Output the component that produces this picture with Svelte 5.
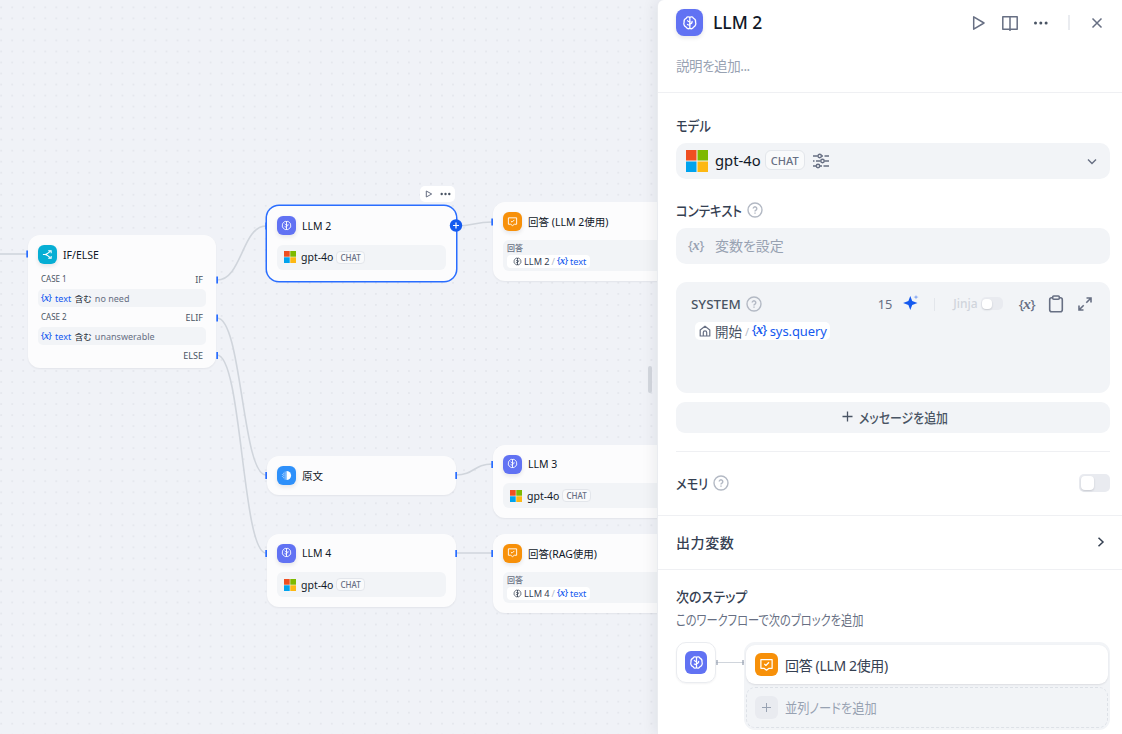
<script lang="ts">
  type FlowNode = {
    id: string;
    kind: 'llm' | 'answer' | 'template' | 'ifelse';
    title: string;
    x: number;
    y: number;
    w: number;
    h: number;
    ref?: string;
    selected?: boolean;
  };

  const nodes: FlowNode[] = [
    {id: 'if', kind: 'ifelse', title: 'IF/ELSE', x: 28, y: 235, w: 188, h: 133},
    {id: 'llm2', kind: 'llm', title: 'LLM 2', x: 267, y: 206, w: 189, h: 75, selected: true},
    {id: 'a1', kind: 'answer', title: '回答 (LLM 2使用)', x: 493, y: 202, w: 189, h: 79, ref: 'LLM 2'},
    {id: 'tpl', kind: 'template', title: '原文', x: 267, y: 456, w: 189, h: 39},
    {id: 'llm3', kind: 'llm', title: 'LLM 3', x: 493, y: 444.5, w: 189, h: 73.5},
    {id: 'llm4', kind: 'llm', title: 'LLM 4', x: 267, y: 533.5, w: 189, h: 73.5},
    {id: 'a2', kind: 'answer', title: '回答(RAG使用)', x: 493, y: 533.5, w: 189, h: 79.5, ref: 'LLM 4'},
  ];

  const cases = [
    {label: 'CASE 1', branch: 'IF', value: 'no need'},
    {label: 'CASE 2', branch: 'ELIF', value: 'unanswerable'},
  ];

  const edges = [
    'M0 254H27',
    'M217 280C242 280 242 226 266 226',
    'M217 318C242 318 242 475 266 475',
    'M217 355C242 355 242 553 266 553',
    'M456 226C474 226 474 222 492 222',
    'M456 475C474 475 474 464 492 464',
    'M456 553H492',
  ];

  const handles = [
    [26, 254],
    [216, 280],
    [216, 318],
    [216, 355.5],
    [265, 226],
    [265, 475.5],
    [265, 553.5],
    [455, 475.5],
    [455, 553.5],
    [491, 222],
    [491, 464.5],
    [491, 553.5],
  ];

  let memory = $state(false);
  let jinja = $state(false);
</script>

{#snippet brain()}
  <svg viewBox="0 0 24 24" fill="none" stroke="currentColor" stroke-width="2" stroke-linecap="round" stroke-linejoin="round" aria-hidden="true">
    <path d="M12 4v16M12 3.500C10 2.200 7.500 2.800 6.500 5C4 6 2.800 8.500 3.200 11C2 14 3.500 17.500 6.300 18.500C7.500 21 10 21.600 12 20.500" />
    <path d="M12 3.500C14 2.200 16.500 2.800 17.500 5C20 6 21.200 8.500 20.800 11C22 14 20.500 17.500 17.700 18.500C16.500 21 14 21.600 12 20.500" />
    <path d="M12 13.500C14 13.500 15.500 12.500 15.500 10M12 10.500C10.300 10.500 9.300 10 8.500 8.800M12 15.500C10.500 15.500 9.500 15.300 8.500 14.500" />
  </svg>
{/snippet}

{#snippet block_icon(kind: string)}
  <span class="block_icon {kind}">
    {#if kind === 'llm'}
      {@render brain()}
    {:else if kind === 'answer'}
      <svg viewBox="0 0 24 24" fill="none" stroke="currentColor" stroke-width="2" stroke-linejoin="round" aria-hidden="true">
        <path d="M3 4h18v14h-5l-4 3-4-3H3z" />
        <path d="M8.500 11l2.500 2.500L16 8.500" />
      </svg>
    {:else if kind === 'template'}
      <svg viewBox="0 0 24 24" fill="currentColor" aria-hidden="true">
        <path d="M12 2a10 10 0 0 1 0 20z" />
        <path d="M8 3h2v18H8zM5 6h1.800v3H5zM5 10.500h1.800v3H5zM5 15h1.800v3H5zM2 8.500h1.800v2.500H2zM2 13h1.800v2.500H2z" opacity=".6" />
      </svg>
    {:else}
      <svg viewBox="0 0 24 24" fill="none" stroke="currentColor" stroke-width="2.200" aria-hidden="true">
        <path d="M2 12h7M9 12l9-7M9 12l9 7M13.500 4H20v5M13.500 20H20v-5" />
        <circle cx="9" cy="12" r="2" fill="currentColor" stroke="none" />
      </svg>
    {/if}
  </span>
{/snippet}

{#snippet microsoft()}
  <svg class="ms" viewBox="0 0 22 22" aria-hidden="true">
    <path fill="#f3f3f3" d="M0 0h22v22H0z" />
    <path fill="#ef4f21" d="M0 0h10.500v10.500H0z" />
    <path fill="#7eb900" d="M11.500 0H22v10.500H11.500z" />
    <path fill="#00a3ee" d="M0 11.500h10.500V22H0z" />
    <path fill="#fdb813" d="M11.500 11.500H22V22H11.500z" />
  </svg>
{/snippet}

{#snippet variable()}
  <span class="variable">&#123;<i>x</i>&#125;</span>
{/snippet}

{#snippet help()}
  <svg class="help" viewBox="0 0 16 16" fill="none" stroke="currentColor" stroke-width="1.400" aria-hidden="true">
    <circle cx="8" cy="8" r="7" />
    <path d="M6.200 6.600a1.800 1.800 0 1 1 2.800 1.500c-.7.400-1 .7-1 1.300" />
    <path d="M8 10.400v1.300" />
  </svg>
{/snippet}

<div class="workflow">
  <div class="canvas">
    <svg class="layer" width="1122" height="734" aria-hidden="true">
      <defs>
        <pattern id="dots" width="11.020" height="11.020" x="-4.300" y="1.900" patternUnits="userSpaceOnUse">
          <circle cx="5.500" cy="5.500" r=".8" fill="#dfe1e7" />
        </pattern>
      </defs>
      <rect width="1122" height="734" fill="url(#dots)" />
      {#each edges as d}
        <path {d} fill="none" stroke="#d0d5dc" stroke-width="1.600" />
      {/each}
    </svg>

    {#each nodes as node (node.id)}
      <div
        class="node"
        class:selected={node.selected}
        style="left: {node.x}px; top: {node.y}px; width: {node.w}px; height: {node.h}px"
      >
        <div class="node_head">
          {@render block_icon(node.kind)}
          <span class="node_title">{node.title}</span>
        </div>
        {#if node.kind === 'llm'}
          <div class="node_model">
            {@render microsoft()}
            <span>gpt-4o</span>
            <span class="badge">CHAT</span>
          </div>
        {:else if node.kind === 'answer'}
          <div class="node_answer">
            <span class="answer_label">回答</span>
            <span class="chip">
              {@render brain()}
              <span>{node.ref}</span>
              <span class="slash">/</span>
              {@render variable()}
              <span class="blue">text</span>
            </span>
          </div>
        {:else if node.kind === 'ifelse'}
          <div class="cases">
            {#each cases as item}
              <div class="case_row">
                <span class="case_label">{item.label}</span>
                <span class="branch">{item.branch}</span>
              </div>
              <div class="condition">
                {@render variable()}
                <span class="blue">text</span>
                <span class="operator">含む</span>
                <span>{item.value}</span>
              </div>
            {/each}
            <div class="case_row last">
              <span class="branch">ELSE</span>
            </div>
          </div>
        {/if}
      </div>
    {/each}

    <svg class="layer" width="1122" height="734" aria-hidden="true">
      {#each handles as [x, y]}
        <rect x={x + 0.3} y={y - 3.5} width="1.700" height="7" fill="#296dff" />
      {/each}
      <circle cx="456" cy="225.500" r="6.200" fill="#155aef" />
      <path d="M453 225.500h6M456 222.500v6" stroke="#fff" stroke-width="1.200" />
    </svg>

    <div class="node_tools">
      <svg width="8" height="8" viewBox="0 0 8 8" aria-hidden="true"><path d="M1.300 1v6L6.700 4z" fill="none" stroke="#676f83" /></svg>
      <svg width="11" height="8" viewBox="0 0 11 8" fill="#495464" aria-hidden="true">
        <circle cx="1.700" cy="4" r="1.200" /><circle cx="5.500" cy="4" r="1.200" /><circle cx="9.300" cy="4" r="1.200" />
      </svg>
    </div>
    <div class="resizer"></div>
  </div>

  <aside class="panel">
    <header class="panel_head">
      <div class="title_row">
        {@render block_icon('llm')}
        <h1>LLM 2</h1>
        <div class="head_tools">
          <svg width="18" height="18" viewBox="0 0 18 18" fill="none" stroke="currentColor" stroke-width="1.500" stroke-linejoin="round" aria-hidden="true"><path d="M4.700 2.800v12.400L15 9z" /></svg>
          <svg width="18" height="18" viewBox="0 0 18 18" fill="none" stroke="currentColor" stroke-width="1.500" stroke-linejoin="round" aria-hidden="true"><path d="M9 17V3.300M9 3.300L8.200 2.700H1.800v12.500h6.400l.8.600.8-.6h6.400V2.700H9.800z" /></svg>
          <svg width="18" height="18" viewBox="0 0 18 18" fill="#495464" aria-hidden="true"><circle cx="3.500" cy="9" r="1.500" /><circle cx="8.800" cy="9" r="1.500" /><circle cx="14.100" cy="9" r="1.500" /></svg>
          <span class="separator"></span>
          <svg width="18" height="18" viewBox="0 0 18 18" stroke="currentColor" stroke-width="1.500" aria-hidden="true"><path d="M4.500 4.500l9 9M13.500 4.500l-9 9" /></svg>
        </div>
      </div>
      <p class="description">説明を追加...</p>
    </header>

    <section class="settings">
      <div class="label"><span class="t_model">モデル</span></div>
      <div class="field model_field">
        {@render microsoft()}
        <span class="model_name">gpt-4o</span>
        <span class="badge">CHAT</span>
        <svg class="sliders" width="16" height="16" viewBox="0 0 16 16" fill="none" stroke="currentColor" stroke-width="1.400" aria-hidden="true">
          <path d="M0 3h4.800M8.500 3H10M11.500 3H16M0 8h1.500M3 8h4.600M11.300 8H16M0 13h3.200M7 13h2M10.500 13H16" />
          <circle cx="6.700" cy="3" r="1.700" /><circle cx="9.500" cy="8" r="1.700" /><circle cx="5" cy="13" r="1.700" />
        </svg>
        <svg class="chevron" width="10" height="10" viewBox="0 0 10 10" fill="none" stroke="currentColor" stroke-width="1.400" aria-hidden="true"><path d="M1 3.500l4 4 4-4" /></svg>
      </div>

      <div class="label context_label"><span class="t_context">コンテキスト</span>{@render help()}</div>
      <div class="field context_field">
        {@render variable()}
        <span class="t_placeholder">変数を設定</span>
      </div>

      <div class="prompt">
        <div class="prompt_head">
          <span class="prompt_role">SYSTEM</span>
          {@render help()}
          <div class="prompt_tools">
            <span class="count">15</span>
            <svg class="sparkle" width="16" height="16" viewBox="0 0 16 16" fill="#155aef" aria-hidden="true">
              <path d="M7.300 1L9.200 6l5.300 2-5.300 2-1.900 5-1.900-5L.1 8l5.300-2z" />
              <path d="M13 0l.7 1.400 1.800.7-1.800.7L13 4.200l-.7-1.400-1.800-.7 1.800-.7z" opacity=".5" />
            </svg>
            <span class="thin"></span>
            <span class="jinja">Jinja</span>
            <button class="switch mini" class:on={jinja} aria-label="Jinja" onclick={() => (jinja = !jinja)}></button>
            <span class="insert">{@render variable()}</span>
            <svg class="clipboard" width="16" height="18" viewBox="0 0 16 18" fill="none" stroke="currentColor" stroke-width="1.600" aria-hidden="true">
              <rect x="1.700" y="2.700" width="12.600" height="14" rx="2" /><rect x="4.700" y="1" width="6.600" height="3.200" rx="1" fill="#f2f4f7" />
            </svg>
            <svg width="16" height="16" viewBox="0 0 16 16" fill="none" stroke="currentColor" stroke-width="1.600" aria-hidden="true"><path d="M9.500 2H14v4.500M14 2L9.300 6.700M6.500 14H2V9.500M2 14l4.700-4.700" /></svg>
          </div>
        </div>
        <div class="prompt_body">
          <span class="prompt_chip">
            <svg width="12" height="12" viewBox="0 0 12 12" fill="none" stroke="#676f83" stroke-width="1.200" stroke-linejoin="round" aria-hidden="true"><path d="M1.200 5L6 1.200 10.800 5v6H1.200zM4.300 11V7.500a1.700 1.700 0 0 1 3.400 0V11" /></svg>
            <span class="start">開始</span>
            <span class="slash">/</span>
            {@render variable()}
            <span class="blue query">sys.query</span>
          </span>
        </div>
      </div>

      <button class="add_message">
        <svg width="11" height="11" viewBox="0 0 11 11" stroke="currentColor" stroke-width="1.300" aria-hidden="true"><path d="M5.500 .5v10M.5 5.500h10" /></svg>
        <span class="t_message">メッセージを追加</span>
      </button>

      <div class="memory">
        <span class="t_memory">メモリ</span>
        {@render help()}
        <button class="switch" class:on={memory} aria-label="メモリ" onclick={() => (memory = !memory)}></button>
      </div>
    </section>

    <section class="output">
      <span class="t_output">出力変数</span>
      <svg width="10" height="12" viewBox="0 0 10 12" fill="none" stroke="currentColor" stroke-width="1.500" aria-hidden="true"><path d="M2.500 1.700L7 6l-4.500 4.300" /></svg>
    </section>

    <section class="next">
      <h2 class="t_next">次のステップ</h2>
      <p class="t_next_hint">このワークフローで次のブロックを追加</p>
      <div class="next_row">
        <div class="next_from">{@render block_icon('llm')}</div>
        <svg class="link" width="28" height="40" viewBox="0 0 28 40" aria-hidden="true">
          <path d="M0 20.500h28" stroke="#d0d5dc" />
          <path d="M1 18v5M27 18v5" stroke="#98a2b2" stroke-width="1.300" />
        </svg>
        <div class="next_list">
          <div class="next_item">
            {@render block_icon('answer')}
            <span class="t_answer">回答 (LLM 2使用)</span>
          </div>
          <div class="next_item add">
            <span class="add_icon">
              <svg width="9" height="9" viewBox="0 0 9 9" stroke="currentColor" aria-hidden="true"><path d="M4.500 0v9M0 4.500h9" /></svg>
            </span>
            <span class="t_parallel">並列ノードを追加</span>
          </div>
        </div>
      </div>
    </section>
  </aside>
</div>

<style>
  :global(body) {
    overflow: hidden;
  }

  .workflow {
    position: relative;
    display: flex;
    justify-content: flex-end;
    width: 1122px;
    height: 734px;
    overflow: hidden;
    background: #f0f2f7;
    color: #354052;
    font-family: 'Noto Sans', 'Noto Sans CJK JP', sans-serif;
    font-size: 14px;
    font-feature-settings: 'palt';
  }

  .workflow * {
    box-sizing: border-box;
  }

  span {
    white-space: nowrap;
  }

  svg {
    flex: none;
    display: block;
  }

  h1,
  h2,
  p {
    margin: 0;
  }

  button {
    border: 0;
    padding: 0;
    font: inherit;
    font-feature-settings: inherit;
    cursor: pointer;
  }

  .canvas,
  .layer {
    position: absolute;
    inset: 0;
  }

  .node {
    position: absolute;
    display: flex;
    flex-direction: column;
    padding: 10px;
    border-radius: 12px;
    background: #fcfcfd;
    box-shadow: 0 1px 2px rgba(16, 24, 40, 0.06);
    font-size: 9px;
  }

  .node.selected {
    box-shadow: 0 0 0 1.5px #296dff;
  }

  .node_head {
    display: flex;
    align-items: center;
    gap: 6px;
    height: 19px;
    flex: none;
  }

  .node_title {
    color: #101828;
    font-size: 10.5px;
    font-weight: 400;
  }

  .block_icon {
    display: flex;
    flex: none;
    align-items: center;
    justify-content: center;
    width: 19px;
    height: 19px;
    border-radius: 6px;
    color: #fff;
    box-shadow: 0 2px 4px rgba(16, 24, 40, 0.1);
  }

  .block_icon svg {
    width: 58%;
    height: 58%;
  }

  .llm {
    background: #6172f3;
  }

  .answer {
    background: #f79009;
  }

  .template {
    background: #2e90fa;
  }

  .ifelse {
    background: #06aed4;
  }

  .node_model {
    display: flex;
    align-items: center;
    height: 25px;
    margin-top: 9.5px;
    padding-left: 7px;
    border-radius: 6px;
    background: #f2f4f7;
    color: #101828;
    font-size: 10.5px;
  }

  .ms {
    width: 12px;
    height: 12px;
    margin-right: 5px;
  }

  .badge {
    display: inline-flex;
    align-items: center;
    height: 13px;
    margin-left: 3px;
    padding: 0 3px;
    border: 1px solid #e3e6eb;
    border-radius: 4px;
    background: #f9fafb;
    color: #676f83;
    font-size: 8px;
    font-weight: 500;
  }

  .node_answer {
    display: flex;
    flex-direction: column;
    align-items: flex-start;
    height: 32px;
    margin-top: 9px;
    padding: 1px 4px;
    border-radius: 6px;
    background: #f2f4f7;
  }

  .answer_label {
    height: 14px;
    color: #676f83;
    font-size: 8px;
    font-weight: 500;
    line-height: 13px;
  }

  .chip {
    display: flex;
    align-items: center;
    gap: 2px;
    height: 13px;
    padding: 0 4px 0 6px;
    border-radius: 4px;
    background: #fff;
    font-size: 9.2px;
  }

  .chip svg {
    width: 9px;
    height: 9px;
  }

  .slash {
    color: #b6bcc8;
  }

  .blue {
    color: #155aef;
  }

  .variable {
    color: #155aef;
    font-family: 'Noto Sans', sans-serif;
    font-size: 0.95em;
    font-weight: 500;
    line-height: 1;
    letter-spacing: -0.3px;
  }

  .variable i {
    font-family: 'Liberation Serif', serif;
    font-size: 1.15em;
    font-weight: 700;
  }

  .cases {
    display: flex;
    flex-direction: column;
    margin-top: 5px;
  }

  .case_row {
    display: flex;
    align-items: center;
    justify-content: space-between;
    height: 20px;
    padding: 0 3px;
    color: #495464;
    font-size: 8px;
  }

  .case_row.last {
    justify-content: flex-end;
  }

  .case_label {
    padding-bottom: 1px;
  }

  .branch {
    padding-top: 1px;
    font-size: 9px;
  }

  .condition {
    display: flex;
    align-items: center;
    gap: 3.5px;
    height: 18px;
    padding-left: 3px;
    border-radius: 5px;
    background: #f2f4f7;
    color: #676f83;
    font-size: 9px;
  }

  .operator {
    color: #101828;
    font-size: 8.5px;
  }

  .node_tools {
    position: absolute;
    top: 186px;
    left: 420px;
    display: flex;
    align-items: center;
    gap: 7px;
    height: 16px;
    padding: 0 4px 0 5px;
    border-radius: 5px;
    background: #fff;
  }

  .resizer {
    position: absolute;
    top: 366px;
    left: 648px;
    width: 4px;
    height: 27px;
    border-radius: 2px;
    background: #d3d7de;
  }

  .panel {
    position: relative;
    width: 464px;
    height: 734px;
    border-radius: 6px 0 0 0;
    background: #fff;
    box-shadow: -1px 0 0 #eaecf0, -4px 0 14px rgba(16, 24, 40, 0.07);
  }

  .panel_head {
    height: 93px;
    padding: 9px 16px 0 18px;
    border-bottom: 1px solid #eff0f3;
  }

  .title_row {
    display: flex;
    align-items: center;
    height: 27px;
  }

  .title_row .block_icon {
    width: 27px;
    height: 27px;
    border-radius: 8px;
  }

  h1 {
    margin-left: 10px;
    color: #101828;
    font-size: 17.5px;
    font-weight: 500;
    line-height: 27px;
  }

  .head_tools {
    display: flex;
    align-items: center;
    gap: 13.5px;
    margin-left: auto;
    color: #676f83;
  }

  .separator {
    width: 2px;
    height: 15px;
    margin: 0 5px 0 4px;
    background: #eaecf0;
  }

  .description {
    margin-top: 20px;
    color: #98a2b2;
    font-size: 13.5px;
    line-height: 21px;
    letter-spacing: -0.45px;
  }

  .settings {
    padding: 21px 12px 0 18px;
    height: 423px;
    border-bottom: 1px solid #eff0f3;
  }

  .label {
    display: flex;
    align-items: center;
    height: 21px;
    margin-bottom: 8px;
    font-weight: 500;
  }

  .t_model,
  .t_context,
  .t_message,
  .t_memory,
  .t_next,
  .t_next_hint,
  .t_parallel {
    transform-origin: left;
  }

  .t_model {
    transform: scaleX(0.88);
  }

  .t_context {
    margin-right: -9px;
    transform: scaleX(0.885);
  }

  .t_message {
    margin-right: -16px;
    transform: scaleX(0.85);
  }

  .t_memory {
    margin-right: -5px;
    transform: scaleX(0.87);
  }

  .t_output {
    letter-spacing: 0.6px;
  }

  .t_next {
    transform: scaleX(0.93);
  }

  .t_next_hint {
    transform: scaleX(0.832);
  }

  .t_answer {
    letter-spacing: -0.35px;
  }

  .t_parallel {
    transform: scaleX(0.875);
  }

  .context_label {
    margin-top: 20px;
  }

  .help {
    width: 16px;
    height: 16px;
    margin-left: 5px;
    color: #b3b9c4;
  }

  .field {
    display: flex;
    align-items: center;
    height: 36px;
    padding: 0 13px 0 10px;
    border-radius: 10px;
    background: #f2f4f7;
  }

  .model_field .ms {
    width: 22px;
    height: 22px;
    margin-right: 7px;
  }

  .model_name {
    padding-bottom: 2px;
    color: #101828;
    font-size: 14.8px;
  }

  .model_field .badge {
    height: 20px;
    margin: 0 0 2px 4px;
    padding: 0 5px;
    border-radius: 6px;
    font-size: 11px;
  }

  .sliders {
    margin-left: 8px;
    color: #676f83;
  }

  .chevron {
    margin-left: auto;
    color: #676f83;
  }

  .context_field,
  .context_field .variable {
    color: #98a2b2;
  }

  .context_field {
    padding: 0 0 2px 12px;
    gap: 11px;
  }

  .context_field .variable {
    font-size: 12.5px;
  }

  .prompt {
    height: 111px;
    margin-top: 18px;
    padding: 10px 15px 0;
    border-radius: 11px;
    background: #f2f4f7;
  }

  .prompt_head {
    display: flex;
    align-items: center;
    height: 24px;
  }

  .prompt_role {
    font-size: 13.4px;
    font-weight: 500;
    color: #495464;
  }

  .prompt_tools {
    display: flex;
    align-items: center;
    margin-left: auto;
    margin-right: 2px;
    color: #676f83;
  }

  .count {
    font-size: 12.8px;
  }

  .sparkle {
    margin: 0 0 2px 11px;
  }

  .thin {
    width: 1px;
    height: 13px;
    margin: 0 18px 0 15px;
    background: #e3e6eb;
  }

  .jinja {
    padding-bottom: 2px;
    color: #d0d5dc;
    font-size: 12px;
    font-weight: 500;
  }

  .switch {
    display: flex;
    align-items: center;
    width: 31px;
    height: 18px;
    margin-left: auto;
    padding: 0 2px;
    border-radius: 5px;
    background: #e9ebf0;
  }

  .switch::before {
    content: '';
    width: 13px;
    height: 14px;
    border-radius: 4px;
    background: #fff;
    box-shadow: 0 1px 2px rgba(16, 24, 40, 0.16);
  }

  .switch.on {
    justify-content: flex-end;
    background: #155aef;
  }

  .switch.mini {
    width: 22px;
    height: 13px;
    margin: 0 0 1px 3px;
    padding: 0 1px;
  }

  .switch.mini::before {
    width: 10px;
    height: 10px;
  }

  .insert {
    margin: 0 0 2px 16px;
  }

  .insert .variable {
    color: #676f83;
    letter-spacing: -0.5px;
  }

  .clipboard {
    margin: 0 13px 0 13px;
  }

  .prompt_body {
    display: flex;
    padding: 6px 0 0 4px;
  }

  .prompt_chip {
    display: flex;
    align-items: center;
    gap: 3px;
    height: 18px;
    padding: 0 3px 0 4px;
    border-radius: 5px;
    background: #fff;
    font-size: 13px;
  }

  .prompt_chip .variable {
    padding-bottom: 2px;
    font-size: 12px;
    letter-spacing: -0.5px;
  }

  .prompt_chip .slash {
    font-size: 11px;
  }

  .query {
    letter-spacing: -0.1px;
  }

  .start {
    margin-left: 1px;
    color: #495464;
    font-size: 13.5px;
  }

  .add_message {
    display: flex;
    align-items: center;
    justify-content: center;
    gap: 6px;
    width: 100%;
    height: 31px;
    margin-top: 9px;
    padding: 0 0 2px 3px;
    border-radius: 9px;
    background: #f2f4f7;
    color: #495464;
    font-weight: 500;
  }

  .memory {
    display: flex;
    align-items: center;
    height: 63px;
    margin-top: 18px;
    border-top: 1px solid #eff0f3;
    font-weight: 500;
  }

  .output {
    display: flex;
    align-items: center;
    justify-content: space-between;
    height: 54px;
    padding: 0 16px 1px 18px;
    border-bottom: 1px solid #eff0f3;
    font-weight: 500;
  }

  .next {
    padding: 15px 12px 0 18px;
  }

  h2 {
    width: max-content;
    font-size: 14px;
    font-weight: 500;
    line-height: 24px;
  }

  .next p {
    width: max-content;
    color: #676f83;
    font-size: 13.5px;
    line-height: 23px;
  }

  .next_row {
    display: flex;
    align-items: flex-start;
    margin-top: 10px;
  }

  .next_from {
    display: flex;
    align-items: center;
    justify-content: center;
    width: 40px;
    height: 41px;
    border: 1px solid #eaecf0;
    border-radius: 10px;
    box-shadow: 0 1px 2px rgba(16, 24, 40, 0.05);
  }

  .next_row .block_icon {
    width: 23px;
    height: 23px;
    box-shadow: none;
  }

  .next_row .next_from .block_icon {
    width: 22px;
  }

  .next_row .block_icon svg {
    width: 15px;
    height: 15px;
  }

  .next_list {
    display: flex;
    flex: 1;
    flex-direction: column;
    gap: 3px;
    padding: 3px 2px 2px;
    border-radius: 11px;
    background: #f2f4f7;
  }

  .next_item {
    display: flex;
    align-items: center;
    gap: 7px;
    height: 39px;
    padding-left: 9px;
    border-radius: 9px;
    background: #fff;
    box-shadow: 0 1px 2px rgba(16, 24, 40, 0.1);
  }

  .next_item.add {
    height: 41px;
    padding: 0 0 1px 8px;
    border: 1px dashed #dde1e7;
    background: none;
    box-shadow: none;
    color: #98a2b2;
  }

  .add_icon {
    display: flex;
    align-items: center;
    justify-content: center;
    width: 23px;
    height: 23px;
    border-radius: 6px;
    background: #e9ebf0;
  }
</style>
